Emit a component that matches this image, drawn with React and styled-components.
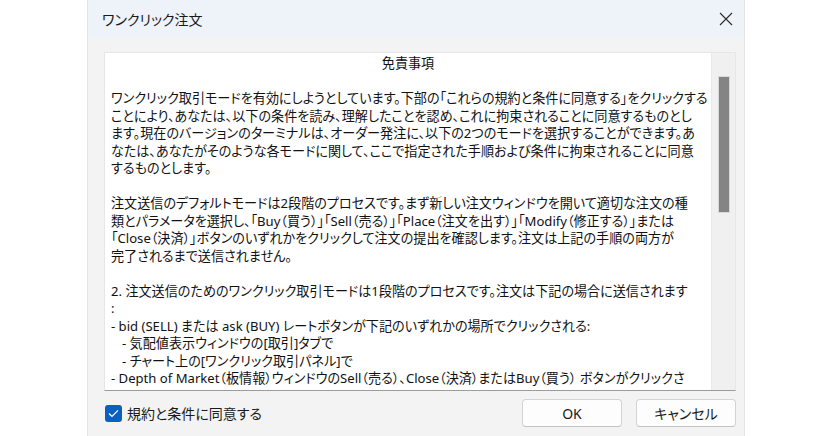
import React from 'react';
import styled, { createGlobalStyle } from 'styled-components';

const GlobalStyle = createGlobalStyle`
  html, body {
    margin: 0;
    padding: 0;
    background: #ffffff;
  }
  body {
    font-family: "Noto Sans", "Noto Sans CJK JP", sans-serif;
    color: #1a1a1a;
  }
`;

// Window frame
const Window = styled.div`
  margin-left: 87px;
  width: 658px;
  height: 436px;
  box-sizing: border-box;
  background: #f3f3f3;
  border-left: 1px solid #e4e4e4;
  border-right: 1px solid #e4e4e4;
  display: flex;
  flex-direction: column;
  overflow: hidden;
`;

const TitleBar = styled.div`
  height: 38px;
  flex-shrink: 0;
  background: #eef2f9;
  display: flex;
  align-items: center;
  justify-content: space-between;
  padding: 0 10px 0 14px;
`;

const Title = styled.div`
  font-size: 14px;
  font-feature-settings: "palt";
  color: #1a1a1a;
`;

const CloseButton = styled.button`
  width: 16px;
  height: 16px;
  padding: 0;
  border: none;
  background: transparent;
  display: flex;
  align-items: center;
  justify-content: center;
`;

const Body = styled.div`
  flex: 1;
  display: flex;
  flex-direction: column;
  padding: 14px 8px 0 16px;
`;

// Scrolling text panel
const Panel = styled.div`
  height: 339px;
  box-sizing: border-box;
  display: flex;
  background: #ffffff;
  border: 1px solid #e6e6e6;
  border-bottom-color: #9c9c9c;
`;

const Content = styled.div`
  flex: 1;
  overflow: hidden;
  padding: 2px 0 0 6px;
  font-size: 13.1px;
  line-height: 17.5px;
  font-feature-settings: "palt";
  color: #111;
`;

const Heading = styled.div`
  text-align: center;
  margin-left: -6px;
  margin-bottom: 17.5px;
`;

const Paragraph = styled.div`
  margin-bottom: 17.5px;
`;

const Line = styled.div`
  white-space: nowrap;
  padding-left: ${(p) => (p.indent ? '11px' : '0')};
`;

const Track = styled.div`
  width: 23px;
  flex-shrink: 0;
  background: #f0f0f0;
  border-left: 1px solid #e9e9e9;
  padding-top: 24px;
  display: flex;
  justify-content: center;
`;

const Thumb = styled.div`
  width: 10px;
  height: 135px;
  background: #848484;
  outline: 1px solid #d8d8d8;
`;

// Footer row
const Footer = styled.div`
  display: flex;
  align-items: flex-start;
  padding-top: 8px;
`;

const Agree = styled.label`
  flex: 1;
  height: 28px;
  display: flex;
  align-items: center;
  gap: 5px;
  padding-left: 1px;
  font-size: 14px;
  font-feature-settings: "palt";
  color: #1a1a1a;
`;

const Box = styled.span`
  width: 17px;
  height: 17px;
  border-radius: 3px;
  background: #0a5fbf;
  display: flex;
  align-items: center;
  justify-content: center;
`;

const Buttons = styled.div`
  display: flex;
  gap: 14px;
`;

const Button = styled.button`
  width: 100px;
  height: 28px;
  box-sizing: border-box;
  background: #fdfdfd;
  border: 1px solid #d3d3d3;
  border-bottom-color: #c4c4c4;
  border-radius: 4px;
  font-family: "Noto Sans", "Noto Sans CJK JP", sans-serif;
  font-size: 14px;
  font-feature-settings: "palt";
  color: #1a1a1a;
  padding: 0;
`;

const paragraphs = [
  [
    'ワンクリック取引モードを有効にしようとしています。下部の「これらの規約と条件に同意する」をクリックする',
    'ことにより、あなたは、以下の条件を読み、理解したことを認め、これに拘束されることに同意するものとし',
    'ます。現在のバージョンのターミナルは、オーダー発注に、以下の2つのモードを選択することができます。あ',
    'なたは、あなたがそのような各モードに関して、ここで指定された手順および条件に拘束されることに同意',
    'するものとします。',
  ],
  [
    '注文送信のデフォルトモードは2段階のプロセスです。まず新しい注文ウィンドウを開いて適切な注文の種',
    '類とパラメータを選択し、「Buy（買う）」「Sell（売る）」「Place（注文を出す）」「Modify（修正する）」または',
    '「Close（決済）」ボタンのいずれかをクリックして注文の提出を確認します。注文は上記の手順の両方が',
    '完了されるまで送信されません。',
  ],
];

const modeLines = [
  { text: '2. 注文送信のためのワンクリック取引モードは1段階のプロセスです。注文は下記の場合に送信されます' },
  { text: ':' },
  { text: '- bid (SELL) または ask (BUY) レートボタンが下記のいずれかの場所でクリックされる:' },
  { text: '- 気配値表示ウィンドウの[取引]タブで', indent: true },
  { text: '- チャート上の[ワンクリック取引パネル]で', indent: true },
  { text: '- Depth of Market（板情報）ウィンドウのSell（売る）、Close（決済）またはBuy（買う） ボタンがクリックさ' },
];

export default function App() {
  return (
    <>
      <GlobalStyle />
      <Window>
        <TitleBar>
          <Title>ワンクリック注文</Title>
          <CloseButton aria-label="close">
            <svg width="14" height="14" viewBox="0 0 14 14">
              <path d="M1 1 L13 13 M13 1 L1 13" stroke="#2b2b2b" strokeWidth="1.1" fill="none" />
            </svg>
          </CloseButton>
        </TitleBar>
        <Body>
          <Panel>
            <Content>
              <Heading>免責事項</Heading>
              {paragraphs.map((lines, i) => (
                <Paragraph key={i}>
                  {lines.map((l, j) => (
                    <Line key={j}>{l}</Line>
                  ))}
                </Paragraph>
              ))}
              <Paragraph>
                {modeLines.map((l, j) => (
                  <Line key={j} indent={l.indent}>{l.text}</Line>
                ))}
              </Paragraph>
            </Content>
            <Track>
              <Thumb />
            </Track>
          </Panel>
          <Footer>
            <Agree>
              <Box>
                <svg width="11" height="9" viewBox="0 0 11 9">
                  <path d="M1 4.6 L4 7.4 L10 1.4" stroke="#ffffff" strokeWidth="1.3" fill="none" />
                </svg>
              </Box>
              規約と条件に同意する
            </Agree>
            <Buttons>
              <Button>OK</Button>
              <Button>キャンセル</Button>
            </Buttons>
          </Footer>
        </Body>
      </Window>
    </>
  );
}
